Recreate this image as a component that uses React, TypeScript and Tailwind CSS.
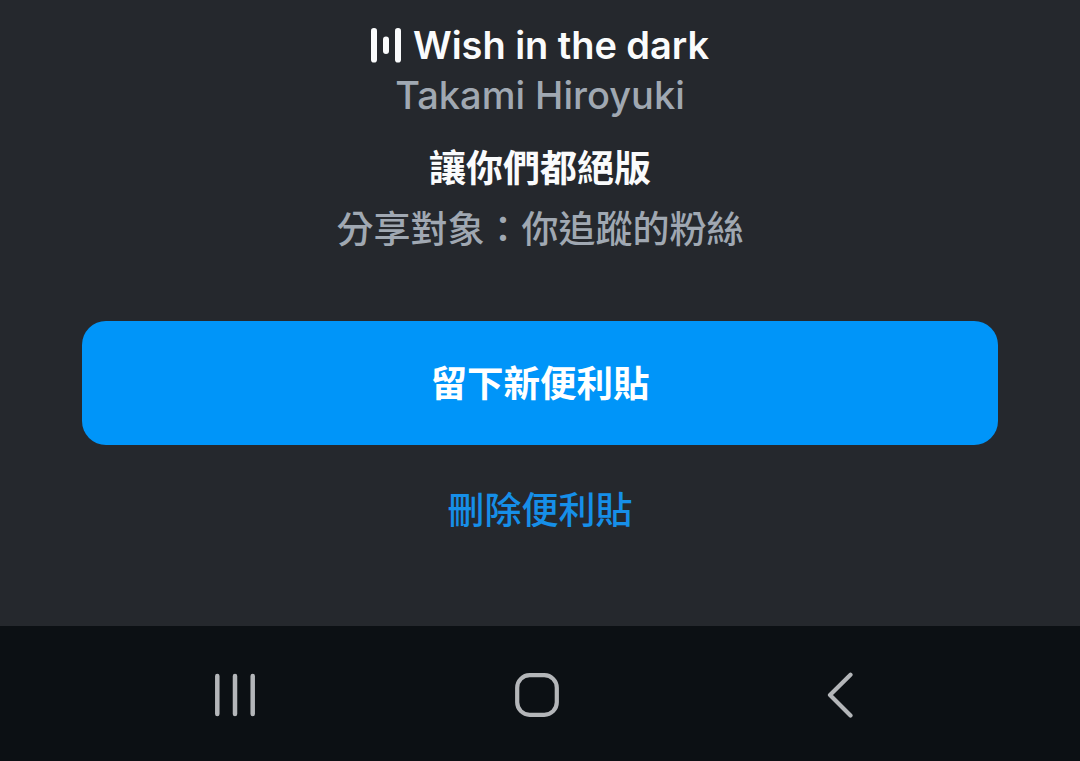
const fonts = 'font-["Inter","Noto_Sans_CJK_TC",sans-serif]';

function MusicBars() {
  return (
    <svg className="w-[30px] h-9 shrink-0" viewBox="0 0 30 36" fill="currentColor">
      <rect x="0" y="1" width="6" height="34.5" rx="2.8" />
      <rect x="12" y="9.5" width="6" height="17.5" rx="3" />
      <rect x="24" y="1" width="6" height="34.5" rx="2.8" />
    </svg>
  );
}

function SongInfo() {
  return (
    <div className="flex flex-col items-center">
      <div className="flex items-center gap-3 h-[50px] text-[#fafbfc]">
        <MusicBars />
        <span className="text-[38px] leading-[50px] font-semibold tracking-[-0.05px] whitespace-nowrap">Wish in the dark</span>
      </div>
      <p className="text-[38px] leading-[50px] font-medium text-[#a0a8b2]">Takami Hiroyuki</p>
    </div>
  );
}

function NavBar() {
  return (
    <nav className="h-[135px] bg-[#0c1014] text-[#b4b6b9] flex items-center pt-[3px]">
      <button className="ml-[214px] w-[42px] h-[44px]" aria-label="最近">
        <svg viewBox="0 0 42 44" fill="none" stroke="currentColor" strokeWidth="4.5" strokeLinecap="round">
          <path d="M3.3 3v38M21 3v38M38.7 3v38" />
        </svg>
      </button>
      <button className="ml-[259px] w-[44px] h-[44px]" aria-label="首頁">
        <svg viewBox="0 0 44 44" fill="none" stroke="currentColor" strokeWidth="4.2">
          <rect x="2.2" y="2.2" width="39.6" height="39.6" rx="12.5" />
        </svg>
      </button>
      <button className="ml-[268px] w-[27px] h-[46px]" aria-label="返回">
        <svg viewBox="0 0 27 46" fill="none" stroke="currentColor" strokeWidth="4.2" strokeLinecap="round" strokeLinejoin="round">
          <path d="M23.5 2.8L3 23l20.5 20.5" />
        </svg>
      </button>
    </nav>
  );
}

export default function App() {
  return (
    <div className={`w-[1080px] h-[761px] overflow-hidden bg-[#25282d] flex flex-col ${fonts}`}>
      <main className="h-[626px] flex flex-col items-center pt-5">
        <SongInfo />
        <p className="mt-6 text-[37px] leading-[50px] font-bold text-[#fafbfc]">讓你們都絕版</p>
        <p className="mt-[11px] text-[37px] leading-[50px] font-medium text-[#a0a8b2]">分享對象：你追蹤的粉絲</p>
        <button className="mt-[66px] pt-0.5 w-[916px] h-[124px] shrink-0 rounded-3xl bg-[#0095f9] text-[36.5px] font-bold text-white">
          留下新便利貼
        </button>
        <button className="mt-[41px] text-[37px] leading-[50px] font-medium text-[#168fe8]">刪除便利貼</button>
      </main>
      <NavBar />
    </div>
  );
}
